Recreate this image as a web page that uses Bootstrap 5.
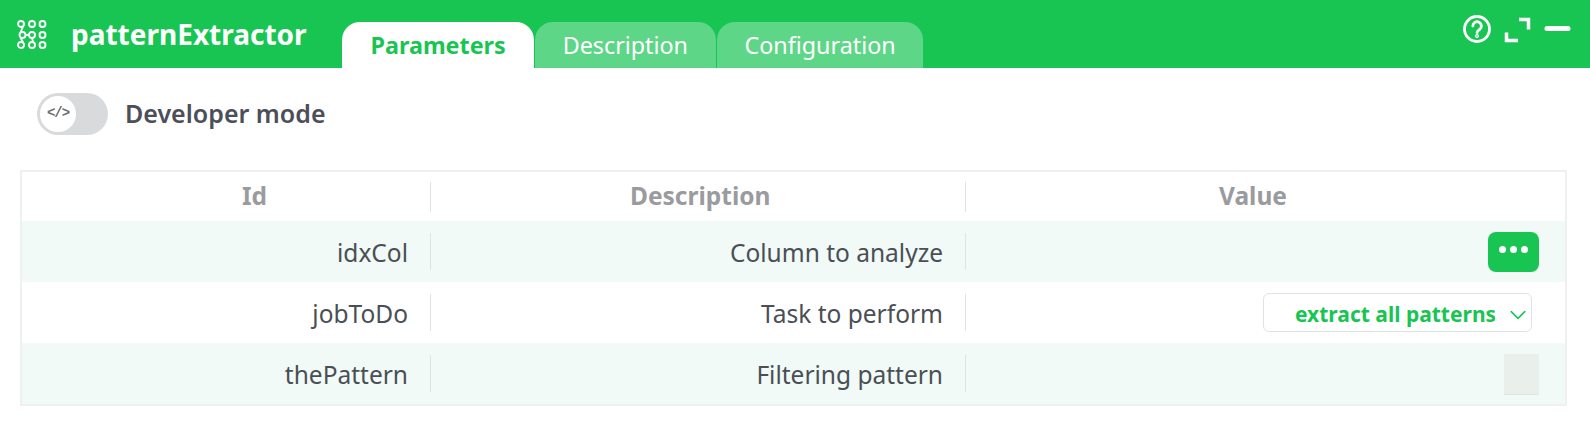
<!DOCTYPE html>
<html lang="en">
<head>
    <meta charset="UTF-8">
    <meta name="viewport" content="width=device-width, initial-scale=1.0">
    <title>patternExtractor</title>
    <link href="https://cdn.jsdelivr.net/npm/bootstrap@5.3.0/dist/css/bootstrap.min.css" rel="stylesheet">
    <style>
        body { font-family: "Noto Sans", sans-serif; background: #fff; color: #4a4f55; }
        .top-bar { height: 68px; background: #19c552; padding-left: 17px; }
        .app-logo { width: 32px; height: 32px; margin-top: 18px; }
        .app-title { color: #fff; font-size: 28px; font-weight: 700; line-height: 32px; margin: 18px 35px 0 22px; }
        .tab-strip { margin-top: 22px; height: 46px; gap: 1px; border: 0; }
        .tab-item { height: 46px; font-size: 23.3px; line-height: 47px; padding: 0 28px; color: #fff; background: #5ed687; border-radius: 18px 18px 0 0; }
        .tab-item.active { background: #fff; color: #19c552; font-weight: 700; padding-left: 29px; }
        .tab-item:last-child { padding: 0 27.5px; }
        .bar-icons { margin-left: auto; padding-right: 19px; padding-top: 15px; gap: 12px; }
        .bar-icons svg { display: block; }
        .bar-icons svg:first-child { margin-right: 1px; }
        .dev-row { height: 102px; padding-left: 37px; padding-bottom: 11px; }
        .dev-toggle { width: 71px; height: 42px; border-radius: 21px; background: #d9dadc; padding: 3px; }
        .dev-knob { width: 36px; height: 36px; border-radius: 50%; background: #fff; color: #6b6e73; font-family: "Liberation Mono", monospace; font-size: 14px; font-weight: 700; letter-spacing: -1px; }
        .dev-label { font-size: 25px; font-weight: 600; color: #4c4f58; margin-left: 17px; }
        .param-box { margin: 0 23px 0 20px; border: 2px solid #eef1f0; }
        .param-table { table-layout: fixed; margin: 0; --bs-table-bg: transparent; }
        .param-table th, .param-table td { padding: 0; border: 0; vertical-align: middle; }
        .col-id { width: 409px; }
        .col-desc { width: 535px; }
        .param-head { height: 49px; }
        .param-head th { font-size: 24.500px; font-weight: 700; color: #9a9b9f; }
        .param-row { height: 61px; font-size: 24.500px; }
        .param-row.tint { background: #f1faf6; }
        .cell-sep { display: flex; align-items: center; justify-content: flex-end; height: 37px; padding-right: 22px; padding-top: 4px; border-right: 1px solid #dce5e3; color: #4a4f55; }
        .param-head .cell-sep { height: 30px; padding-top: 0; justify-content: flex-start; color: #9a9b9f; }
        .head-id { padding-left: 220px; }
        .head-desc { padding-left: 199px; }
        .param-table th.head-value { padding-left: 253px; }
        .more-btn { width: 51px; height: 40px; margin-right: 26px; padding: 0 0 5px; background: #19c552; border: 0; border-radius: 8px; gap: 4px; }
        .more-btn i { display: block; width: 7px; height: 7px; border-radius: 50%; background: #fff; }
        .task-select { width: 269px; height: 39px; margin-right: 33px; padding: 5px 36px 0 31px; font-size: 21px; font-weight: 700; color: #19c552; border: 1px solid #dce5e3; border-radius: 6px; background-position: right 4px top 12px; background-size: 18px 18px; background-image: url("data:image/svg+xml,%3csvg xmlns='http://www.w3.org/2000/svg' viewBox='0 0 16 16'%3e%3cpath fill='none' stroke='%2319c552' stroke-linecap='round' stroke-linejoin='round' stroke-width='1.4' d='M2 5l6 6 6-6'/%3e%3c/svg%3e"); }
        .pattern-box { width: 35px; height: 41px; margin: 1px 26px 0 0; background: #e9f0ec; border-bottom: 1px solid #dfe6e2; }
    </style>
</head>
<body>
    <!-- top bar -->
    <div class="top-bar d-flex align-items-start">
        <svg class="app-logo" viewBox="0 0 32 32" fill="none" stroke="#fff" stroke-width="1.8">
            <circle cx="4" cy="6" r="3"/><circle cx="15" cy="6" r="3"/><circle cx="25.500" cy="6" r="3"/>
            <circle cx="5.500" cy="17" r="3"/><circle cx="15" cy="17" r="3"/><circle cx="25.500" cy="17" r="3"/>
            <circle cx="4" cy="27" r="3"/><circle cx="15" cy="27" r="3"/><circle cx="25.500" cy="27" r="3"/>
            <path d="M6 8.500l-2.500 6M6 24.500l-2.500-5M8.500 17H12M15 20l1 4"/>
        </svg>
        <div class="app-title">patternExtractor</div>
        <div class="nav tab-strip">
            <a class="tab-item active text-decoration-none">Parameters</a>
            <a class="tab-item text-decoration-none">Description</a>
            <a class="tab-item text-decoration-none">Configuration</a>
        </div>
        <div class="bar-icons d-flex">
            <svg width="28" height="28" viewBox="0 0 28 28" fill="none" stroke="#fff" stroke-width="2.8" stroke-linecap="round">
                <circle cx="14" cy="14" r="12.500"/>
                <path d="M9.800 11a4.300 4.300 0 1 1 6.800 3.500c-1.600 1-2.500 1.700-2.500 3"/>
                <circle cx="14" cy="21" r=".6"/>
            </svg>
            <svg width="28" height="28" viewBox="0 0 28 28" fill="none" stroke="#fff" stroke-width="3.500">
                <path d="M15 4.500h9.500v10M14 25.500H2.500v-8"/>
            </svg>
            <svg width="27" height="28" viewBox="0 0 27 28" fill="none" stroke="#fff" stroke-width="5" stroke-linecap="round">
                <path d="M3 13.500h21"/>
            </svg>
        </div>
    </div>

    <!-- developer mode -->
    <div class="dev-row d-flex align-items-center">
        <div class="dev-toggle">
            <div class="dev-knob d-flex align-items-center justify-content-center">&lt;/&gt;</div>
        </div>
        <div class="dev-label">Developer mode</div>
    </div>

    <!-- parameters -->
    <div class="param-box">
        <table class="table param-table">
            <colgroup><col class="col-id"><col class="col-desc"><col></colgroup>
            <thead>
                <tr class="param-head">
                    <th><div class="cell-sep head-id">Id</div></th>
                    <th><div class="cell-sep head-desc">Description</div></th>
                    <th class="head-value">Value</th>
                </tr>
            </thead>
            <tbody>
                <tr class="param-row tint">
                    <td><div class="cell-sep">idxCol</div></td>
                    <td><div class="cell-sep">Column to analyze</div></td>
                    <td>
                        <div class="d-flex justify-content-end">
                            <button type="button" class="btn more-btn d-flex align-items-center justify-content-center"><i></i><i></i><i></i></button>
                        </div>
                    </td>
                </tr>
                <tr class="param-row">
                    <td><div class="cell-sep">jobToDo</div></td>
                    <td><div class="cell-sep">Task to perform</div></td>
                    <td>
                        <div class="d-flex justify-content-end">
                            <select class="form-select task-select">
                                <option>extract all patterns</option>
                            </select>
                        </div>
                    </td>
                </tr>
                <tr class="param-row tint">
                    <td><div class="cell-sep">thePattern</div></td>
                    <td><div class="cell-sep">Filtering pattern</div></td>
                    <td>
                        <div class="d-flex justify-content-end">
                            <div class="pattern-box"></div>
                        </div>
                    </td>
                </tr>
            </tbody>
        </table>
    </div>

    <script src="https://cdn.jsdelivr.net/npm/bootstrap@5.3.0/dist/js/bootstrap.bundle.min.js"></script>
</body>
</html>
